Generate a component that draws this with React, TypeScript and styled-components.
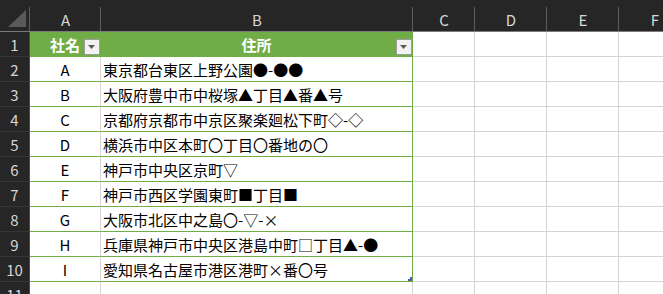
import React from "react";
import styled, { createGlobalStyle } from "styled-components";

const FONT = `"Noto Sans CJK JP", "Noto Sans", sans-serif`;
const GREEN = "#70ad47";
const GRID = "#d4d4d4";
const DARK = "#262626";

const Global = createGlobalStyle`
  html, body {
    margin: 0;
    padding: 0;
    background: #ffffff;
    overflow: hidden;
  }
  body {
    font-family: ${FONT};
  }
`;

const Viewport = styled.div`
  width: 663px;
  height: 294px;
  overflow: hidden;
`;

const Sheet = styled.div`
  display: grid;
  grid-template-columns: 30px 71px 312px 62px 72px 72px 72px;
  grid-template-rows: 32px repeat(11, 25px);
  width: 691px;
  font-family: ${FONT};
  font-size: 15px;
`;

/* Column letters along the top, separators start a few px below the top edge */
const ColHead = styled.div`
  box-sizing: border-box;
  background: ${DARK} linear-gradient(#5c5c5c, #5c5c5c) right bottom / 1px 24px no-repeat;
  border-bottom: 1px solid #7a7a7a;
  color: #d6d6d6;
  display: flex;
  align-items: center;
  justify-content: center;
  padding-top: 7px;
  line-height: 1;
`;

const Corner = styled(ColHead)`
  padding: 0;
  align-items: stretch;
  justify-content: stretch;
`;

const RowHead = styled.div`
  box-sizing: border-box;
  background: ${DARK};
  border-right: 1px solid #4a4a4a;
  border-bottom: 1px solid #363636;
  color: #d6d6d6;
  display: flex;
  align-items: center;
  justify-content: center;
  line-height: 1;
`;

const TitleCell = styled.div`
  box-sizing: border-box;
  background: ${GREEN};
  border-right: 1px solid ${GREEN};
  border-bottom: 1px solid ${GREEN};
  display: grid;
  color: #ffffff;
  font-weight: 700;

  & > * {
    grid-area: 1 / 1;
  }
`;

const TitleText = styled.span`
  justify-self: center;
  align-self: center;
  line-height: 1;
`;

const FilterButton = styled.span`
  justify-self: end;
  align-self: end;
  margin-bottom: 1px;
  box-sizing: border-box;
  width: 16px;
  height: 16px;
  background: #f2f2f2;
  border: 1px solid #9c9c9c;
  display: flex;
  align-items: center;
  justify-content: center;
`;

const DataCell = styled.div<{ $col: "a" | "b" }>`
  box-sizing: border-box;
  background: #ffffff;
  border-bottom: 1px solid ${GREEN};
  border-right: 1px solid ${(p) => (p.$col === "a" ? GRID : GREEN)};
  color: #000000;
  display: grid;
  white-space: nowrap;

  & > * {
    grid-area: 1 / 1;
  }
`;

const CellText = styled.span<{ $align: "center" | "left" }>`
  justify-self: ${(p) => (p.$align === "center" ? "center" : "start")};
  align-self: center;
  padding-left: ${(p) => (p.$align === "left" ? "2px" : "0")};
  line-height: 1;
`;

const ResizeHandle = styled.svg`
  justify-self: end;
  align-self: end;
  display: block;
`;

const PlainCell = styled.div`
  box-sizing: border-box;
  background: #ffffff;
  border-right: 1px solid ${GRID};
  border-bottom: 1px solid ${GRID};
`;

const rows: [string, string][] = [
  ["A", "東京都台東区上野公園●-●●"],
  ["B", "大阪府豊中市中桜塚▲丁目▲番▲号"],
  ["C", "京都府京都市中京区聚楽廻松下町◇-◇"],
  ["D", "横浜市中区本町〇丁目〇番地の〇"],
  ["E", "神戸市中央区京町▽"],
  ["F", "神戸市西区学園東町■丁目■"],
  ["G", "大阪市北区中之島〇-▽-×"],
  ["H", "兵庫県神戸市中央区港島中町□丁目▲-●"],
  ["I", "愛知県名古屋市港区港町×番〇号"],
];

const extraCols = ["C", "D", "E", "F"];

const Filter = () => (
  <FilterButton>
    <svg width="8" height="4" viewBox="0 0 8 4">
      <path d="M0 0H7L3.5 4Z" fill="#595959" />
    </svg>
  </FilterButton>
);

export default function App() {
  return (
    <Viewport>
      <Global />
      <Sheet>
        <Corner>
          <svg width="29" height="31" viewBox="0 0 29 31">
            <path d="M8 27H26V10Z" fill="#5a5a5a" />
          </svg>
        </Corner>
        {["A", "B", ...extraCols].map((c) => (
          <ColHead key={c}>{c}</ColHead>
        ))}

        <RowHead>1</RowHead>
        <TitleCell>
          <TitleText>社名</TitleText>
          <Filter />
        </TitleCell>
        <TitleCell>
          <TitleText>住所</TitleText>
          <Filter />
        </TitleCell>
        {extraCols.map((c) => (
          <PlainCell key={c} />
        ))}

        {rows.map(([name, addr], i) => (
          <React.Fragment key={name}>
            <RowHead>{i + 2}</RowHead>
            <DataCell $col="a">
              <CellText $align="center">{name}</CellText>
            </DataCell>
            <DataCell $col="b">
              <CellText $align="left">{addr}</CellText>
              {i === rows.length - 1 && (
                <ResizeHandle width="4" height="4" viewBox="0 0 4 4">
                  <path d="M2 0H4V4H0V2H2Z" fill="#4b5fb1" />
                </ResizeHandle>
              )}
            </DataCell>
            {extraCols.map((c) => (
              <PlainCell key={c} />
            ))}
          </React.Fragment>
        ))}

        <RowHead>11</RowHead>
        {["A", "B", ...extraCols].map((c) => (
          <PlainCell key={c} />
        ))}
      </Sheet>
    </Viewport>
  );
}
